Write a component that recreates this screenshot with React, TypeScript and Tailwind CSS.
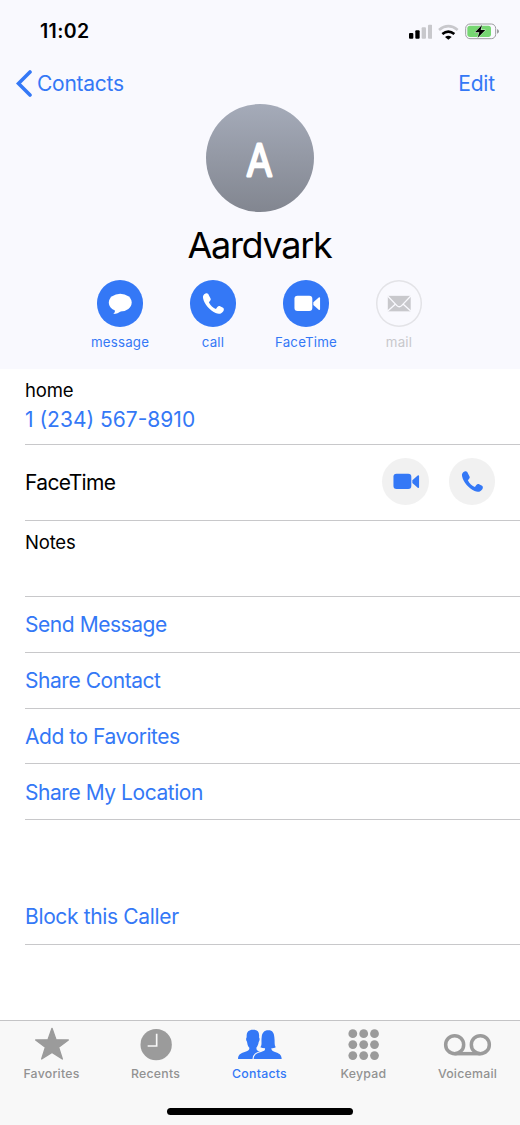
import React from 'react';

interface IconProps {
  className?: string;
}

const MessageIcon: React.FC<IconProps> = ({ className }) => (
  <svg viewBox="0 0 138 138" className={className} fill="currentColor">
    <ellipse cx="69" cy="67" rx="34" ry="26.5" />
    <path d="M53 88 C54 94 52 98 48 101 C58 101 65 98 71 92 Z" />
  </svg>
);

const PhoneIcon: React.FC<IconProps> = ({ className }) => (
  <svg viewBox="0 0 138 138" className={className} fill="currentColor">
    <path d="M46 40 C51 38 55 41 56 45 L61 55 C63 59 60 62 56 66 C60 75 69 83 77 86 C80 81 83 76 88 77 L98 82 C102 85 101 90 97 95 C91 102 83 101 76 98 C57 89 43 72 39 55 C37 48 40 42 46 40 Z" />
  </svg>
);

const VideoIcon: React.FC<IconProps> = ({ className }) => (
  <svg viewBox="0 0 138 138" className={className} fill="currentColor">
    <rect x="34" y="47" width="53" height="45" rx="9" />
    <path d="M90 66 L106 52 Q110 50 110 54 V86 Q110 90 106 88 L90 74 Z" />
  </svg>
);

const MailIcon: React.FC<IconProps> = ({ className }) => (
  <svg viewBox="0 0 138 138" className={className}>
    <rect x="35" y="47" width="68" height="46" fill="#c8c8cc" />
    <g fill="none" stroke="#f9f9fe" strokeWidth="4">
      <path d="M34 47 L62 76 Q69 83 76 76 L104 47" />
      <path d="M34 93 L58 71 M104 93 L80 71" />
    </g>
  </svg>
);

const StarIcon = () => (
  <svg viewBox="0 0 120 108" className="h-9 w-10" fill="#9b9b9b" stroke="#9b9b9b" strokeWidth="4" strokeLinejoin="round">
    <path d="M60 7 L72 41 L109 42 L80 64 L91 99 L60 79 L29 99 L40 64 L11 42 L48 41 Z" />
  </svg>
);

const ClockIcon = () => (
  <svg viewBox="0 0 120 108" className="h-9 w-10">
    <circle cx="60.5" cy="56" r="47" fill="#9b9b9b" />
    <path d="M62 23 V60 H35" fill="none" stroke="#f8f8f8" strokeWidth="5" />
  </svg>
);

const PeopleIcon = () => (
  <svg viewBox="79 48 140 108" className="h-9 w-[46.7px]" fill="#3478f6">
    <path d="M82 147 C82 134 90 130 102 126 C112 123 117 121 116 113 C111 108 110 101 109 95 C105 89 106 85 108 82 C107 66 113 59 127 59 C141 59 147 66 145 82 C148 86 147 92 144 96 C143 103 141 108 137 113 C137 121 141 123 150 126 L160 147 Z" />
    <path
      d="M129 147 C129 134 138 130 151 126 C161 123 164 121 163 115 C158 115 153 114 149 112 C155 105 151 95 153 82 C154 69 160 61 173 61 C186 61 190 69 191 82 C193 95 190 105 195 112 C192 114 187 115 182 115 C182 121 185 123 193 126 C205 130 213 134 213 147 Z"
      stroke="#f8f8f8"
      strokeWidth="7"
      paintOrder="stroke"
    />
    <path d="M78 147 H220 V156 H78 Z" fill="#f8f8f8" />
  </svg>
);

const KeypadIcon = () => (
  <svg viewBox="0 0 40 36" className="h-9 w-10" fill="#9b9b9b">
    {[7.7, 18.6, 29.6].map((y) => [8.8, 19.7, 30.5].map((x) => <circle key={`${x}-${y}`} cx={x} cy={y} r="4.4" />))}
  </svg>
);

const VoicemailIcon = () => (
  <svg viewBox="0 0 150 108" className="h-9 w-[50px]" fill="none" stroke="#9b9b9b" strokeWidth="10.5">
    <circle cx="35" cy="56" r="27" />
    <circle cx="112" cy="56" r="27" />
    <path d="M35 83 H112" />
  </svg>
);

const ACTIONS = [
  { label: 'message', icon: MessageIcon, enabled: true },
  { label: 'call', icon: PhoneIcon, enabled: true },
  { label: 'FaceTime', icon: VideoIcon, enabled: true },
  { label: 'mail', icon: MailIcon, enabled: false },
];

const LINKS = ['Send Message', 'Share Contact', 'Add to Favorites', 'Share My Location'];

const TABS = [
  { label: 'Favorites', icon: StarIcon },
  { label: 'Recents', icon: ClockIcon },
  { label: 'Contacts', icon: PeopleIcon },
  { label: 'Keypad', icon: KeypadIcon },
  { label: 'Voicemail', icon: VoicemailIcon },
];

const StatusBar = () => (
  <div className="flex h-[62px] items-center justify-between pl-10 pr-[21px]">
    <span className="pt-[2px] text-[19.5px] font-semibold tracking-[0.35px]">11:02</span>
    <div className="flex items-center gap-[6px] pt-px">
      {/* Signal */}
      <svg viewBox="60 40 70 48" className="h-4 w-[23.3px]">
        <rect x="60" y="67" width="13" height="17" rx="3" />
        <rect x="79" y="59" width="13" height="25" rx="3" />
        <rect x="98" y="50" width="13" height="34" rx="3" fill="#c8c8cc" />
        <rect x="117" y="42" width="13" height="42" rx="3" fill="#c8c8cc" />
      </svg>
      {/* Wi-Fi */}
      <svg viewBox="147 38 62 48" className="h-4 w-[20.7px]" fill="none">
        <path d="M150 56 Q178 33 206 56" stroke="#c8c8cc" strokeWidth="8" />
        <path d="M160 68 Q178 54 196 68" stroke="#000" strokeWidth="8" />
        <path d="M168 77 Q178 70 188 77 L178 85 Z" fill="#000" />
      </svg>
      {/* Battery */}
      <svg viewBox="225 38 102 50" className="h-[16.7px] w-[34px]">
        <rect x="227" y="41" width="90" height="44" rx="13" fill="none" stroke="#9d9da0" strokeWidth="3" />
        <rect x="232" y="46" width="71" height="34" rx="8" fill="#76d672" />
        <path d="M321 56 Q327 58 327 63 Q327 68 321 70 Z" fill="#9d9da0" />
        <path d="M276 44 L255 66 H268 L263 82 L286 59 H272 Z" stroke="#dff5dd" strokeWidth="3" paintOrder="stroke" />
      </svg>
    </div>
  </div>
);

export default function App() {
  return (
    <div className="flex h-[1125px] w-[520px] flex-col overflow-hidden bg-white font-['Inter',sans-serif] text-black">
      <header className="h-[369px] shrink-0 bg-[#f9f9fe]">
        <StatusBar />

        {/* Navigation */}
        <div className="flex h-[42px] items-center justify-between pl-4 pr-[25px] text-[21px] text-[#3478f6]">
          <button className="flex items-center gap-[5px]">
            <svg viewBox="0 0 16 27" className="h-[27px] w-4" fill="none" stroke="currentColor" strokeWidth="3.6" strokeLinecap="round">
              <path d="M14 2 L2.5 13.5 L14 25" />
            </svg>
            <span className="pt-px tracking-[-0.25px]">Contacts</span>
          </button>
          <button className="pt-px tracking-[-0.15px]">Edit</button>
        </div>

        {/* Profile */}
        <div className="flex flex-col items-center">
          <div className="size-[108px] rounded-full bg-linear-to-b from-[#a5abb9] to-[#828690]">
            <svg viewBox="0 0 108 108" className="size-full">
              <text
                transform="translate(53.5 71.7) scale(0.87 1)"
                textAnchor="middle"
                fontSize="44"
                fontWeight="300"
                fill="#fff"
                stroke="#fff"
                strokeWidth="3"
                strokeLinejoin="round"
              >
                A
              </text>
            </svg>
          </div>
          <h1 className="mr-px mt-[11px] h-11 text-[36px] leading-[44px] tracking-[-1.3px]">Aardvark</h1>
        </div>

        {/* Actions */}
        <div className="mr-px mt-[13px] flex justify-center">
          {ACTIONS.map(({ label, icon: Icon, enabled }) => (
            <button
              key={label}
              className={`flex w-[93px] flex-col items-center ${enabled ? 'text-[#3478f6]' : 'text-[#c8c8cc]'}`}
            >
              <span
                className={`size-[46.5px] rounded-full ${
                  enabled ? 'bg-[#3478f6] text-white' : 'shadow-[inset_0_0_0_1.5px_#e3e3e7]'
                }`}
              >
                <Icon className="size-full" />
              </span>
              <span className="mt-[6.5px] text-[13.3px] leading-[18px] tracking-[0.2px]">{label}</span>
            </button>
          ))}
        </div>
      </header>

      <main className="flex-1 pl-[25px] text-[21px]">
        <div className="h-[76px] border-b border-[#c8c8ca] pt-[9px]">
          <div className="text-[18.5px] leading-6 tracking-[-0.2px]">home</div>
          <div className="mt-[4px] leading-7 text-[#3478f6]">1 (234) 567-8910</div>
        </div>
        <div className="flex h-[76px] items-center justify-between border-b border-[#c8c8ca] pr-[25px]">
          <span className="tracking-[-0.65px]">FaceTime</span>
          <div className="flex gap-[20px] pb-[2px] text-[#3478f6]">
            <button className="size-[46.5px] rounded-full bg-[#f1f1f1]">
              <VideoIcon className="size-full" />
            </button>
            <button className="size-[46.5px] rounded-full bg-[#f1f1f1]">
              <PhoneIcon className="size-full" />
            </button>
          </div>
        </div>
        <div className="h-[76px] border-b border-[#c8c8ca] pt-[9px]">
          <div className="text-[18.5px] leading-6 tracking-[-0.2px]">Notes</div>
        </div>

        {LINKS.map((label) => (
          <button
            key={label}
            className="flex h-[55.8px] w-full items-center border-b border-[#c8c8ca] pt-px tracking-[-0.45px] text-[#3478f6]"
          >
            {label}
          </button>
        ))}
        <button className="mt-[69px] flex h-[56px] w-full items-center border-b border-[#c8c8ca] pt-px tracking-[-0.35px] text-[#3478f6]">
          Block this Caller
        </button>
      </main>

      {/* Tab bar */}
      <nav className="flex h-[105px] shrink-0 flex-col items-center border-t border-[#c4c4c6] bg-[#f8f8f8]">
        <div className="flex w-full pt-[5px]">
          {TABS.map(({ label, icon: Icon }) => (
            <button
              key={label}
              className={`flex w-[104px] flex-col items-center ${label === 'Contacts' ? 'text-[#3478f6]' : 'text-[#929292]'}`}
            >
              <Icon />
              <span className="mr-px mt-[4px] text-[12.3px] font-medium leading-4 tracking-[0.25px]">{label}</span>
            </button>
          ))}
        </div>
        <div className="mt-[26px] h-[7px] w-[186px] rounded-full bg-black" />
      </nav>
    </div>
  );
}
